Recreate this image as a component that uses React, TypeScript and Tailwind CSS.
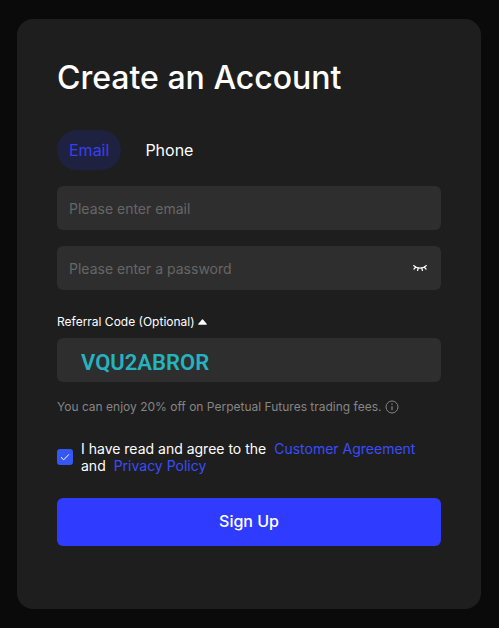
import React, { useState } from 'react';

type Tab = 'email' | 'phone';

// Closed eye, shown while the password is hidden
const ClosedEyeIcon: React.FC = () => (
  <svg width="14" height="8" viewBox="0 0 14 8" fill="none" stroke="currentColor" strokeWidth="1.3" strokeLinecap="round">
    <path d="M0.8 1.6C2.4 3.4 4.5 4.2 7 4.2s4.6-.8 6.2-2.6" />
    <path d="M2.6 3.2L1 5M5.2 4.1L4.6 6.4M8.8 4.1l.6 2.3M11.4 3.2L13 5" />
  </svg>
);

const InfoIcon: React.FC = () => (
  <svg width="14" height="14" viewBox="0 0 14 14" fill="none" stroke="currentColor">
    <circle cx="7" cy="7" r="6" />
    <path d="M7 6.2v4.1M7 3.6v1.2" strokeWidth="1.2" />
  </svg>
);

const TabButton: React.FC<{
  label: string;
  active: boolean;
  onClick: () => void;
}> = ({ label, active, onClick }) => (
  <button
    type="button"
    role="tab"
    aria-selected={active}
    onClick={onClick}
    className={`h-10 rounded-[20px] px-3 text-base ${active ? 'bg-[#1f2140] text-[#3640f0]' : 'text-white'}`}
  >
    {label}
  </button>
);

const App: React.FC = () => {
  const [tab, setTab] = useState<Tab>('email');
  const [showPassword, setShowPassword] = useState(false);
  const [showReferral, setShowReferral] = useState(true);
  const [referral, setReferral] = useState('VQU2ABROR');
  const [agreed, setAgreed] = useState(true);

  return (
    <main className="min-h-screen bg-[#0a0a0a] py-[19px] pr-[18px] pl-[17px] font-['Inter',sans-serif] text-white">
      <form
        onSubmit={(e) => e.preventDefault()}
        className="mx-auto max-w-xl rounded-2xl bg-[#1e1e1e] px-10 pt-[35px] pb-[63px]"
      >
        <h1 className="mb-7 text-[32px] leading-12 font-medium">Create an Account</h1>

        <div role="tablist" className="mb-4 flex gap-3">
          <TabButton label="Email" active={tab === 'email'} onClick={() => setTab('email')} />
          <TabButton label="Phone" active={tab === 'phone'} onClick={() => setTab('phone')} />
        </div>

        <input
          type={tab === 'email' ? 'email' : 'tel'}
          aria-label={tab === 'email' ? 'Email' : 'Phone'}
          placeholder={tab === 'email' ? 'Please enter email' : 'Please enter phone'}
          className="mb-4 block h-11 w-full rounded-md bg-[#2e2e2e] px-3 text-sm outline-none placeholder:text-[#666666]"
        />

        <div className="mb-[22px] flex h-11 items-center rounded-md bg-[#2e2e2e] pr-3.5 pl-3">
          <input
            type={showPassword ? 'text' : 'password'}
            aria-label="Password"
            placeholder="Please enter a password"
            className="h-full min-w-0 flex-1 bg-transparent text-sm outline-none placeholder:text-[#666666]"
          />
          <button type="button" aria-label="Toggle password visibility" onClick={() => setShowPassword(!showPassword)}>
            <ClosedEyeIcon />
          </button>
        </div>

        <div className="mb-1.5 flex h-5 items-center gap-[3px] text-xs">
          <label htmlFor="referral">Referral Code (Optional)</label>
          <button type="button" aria-label="Toggle referral code" onClick={() => setShowReferral(!showReferral)}>
            <svg width="9" height="6" viewBox="0 0 9 6" fill="currentColor">
              <path d="M4 .5a.7.7 0 0 1 1 0L8.6 4.8c.4.5.1 1-.5 1H.9c-.6 0-.9-.5-.5-1z" />
            </svg>
          </button>
        </div>
        {showReferral && (
          <input
            id="referral"
            type="text"
            value={referral}
            onChange={(e) => setReferral(e.target.value)}
            className="block h-11 w-full rounded-md bg-[#2e2e2e] px-6 pt-1 font-['Roboto',sans-serif] text-[22px] font-semibold text-[#26b3c0] outline-none"
          />
        )}

        <p className="mt-[15px] flex items-center gap-1 text-xs leading-5 text-[#858585]">
          You can enjoy 20% off on Perpetual Futures trading fees.
          <InfoIcon />
        </p>

        <div className="mt-[23px] mb-6 flex items-center gap-2">
          <span className="relative h-4 w-4 shrink-0">
            <input
              id="agree"
              type="checkbox"
              checked={agreed}
              onChange={(e) => setAgreed(e.target.checked)}
              className="peer block h-4 w-4 appearance-none rounded-[3px] bg-[#2e2e2e] checked:bg-[#3558f5]"
            />
            <svg
              viewBox="0 0 16 16"
              fill="none"
              stroke="white"
              className="pointer-events-none absolute inset-0 hidden peer-checked:block"
            >
              <path d="M4 8.2l2.7 2.6L12 5.3" />
            </svg>
          </span>
          <p className="text-sm leading-[17px]">
            <label htmlFor="agree">I have read and agree to the</label>{' '}
            <a href="#agreement" className="ml-1 text-[#3a4dfa]">Customer Agreement</a>{' '}
            and <a href="#privacy" className="ml-1 text-[#3a4dfa]">Privacy Policy</a>
          </p>
        </div>

        <button type="submit" className="h-12 w-full rounded-md bg-[#2f3cff] pb-0.5 text-base font-medium">
          Sign Up
        </button>
      </form>
    </main>
  );
};

export default App;
